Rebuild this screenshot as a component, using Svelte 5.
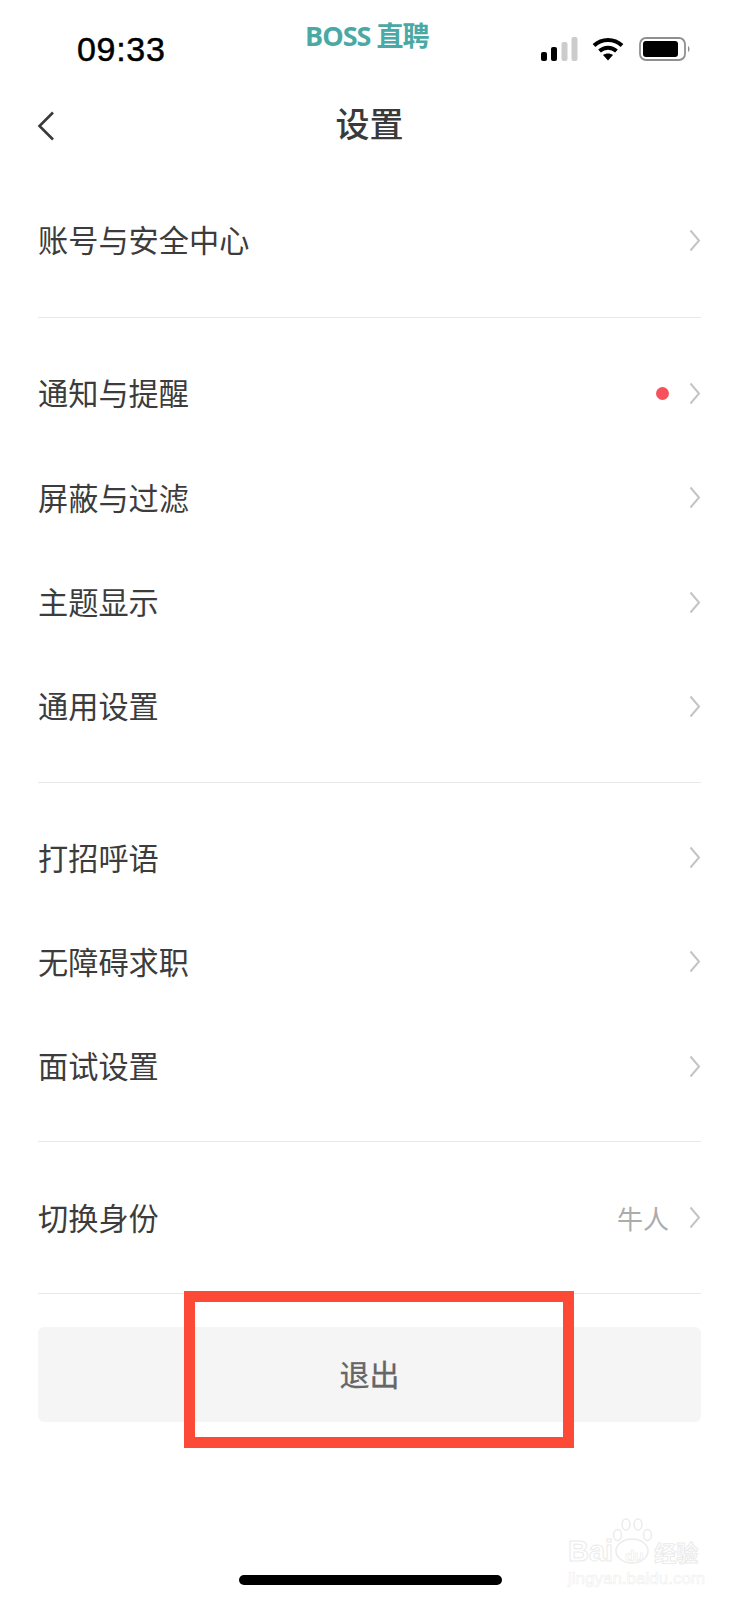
<script>
  const chevron = 'M1.5 1.5 L10 11.5 L1.5 21.5';
  const groups = [
    [{ label: '账号与安全中心' }],
    [{ label: '通知与提醒', dot: true }, { label: '屏蔽与过滤' }, { label: '主题显示' }, { label: '通用设置' }],
    [{ label: '打招呼语' }, { label: '无障碍求职' }, { label: '面试设置' }],
    [{ label: '切换身份', value: '牛人' }]
  ];
</script>

<div class="page">
  <header class="status">
    <span class="time">09:33</span>
    <span class="brand">BOSS 直聘</span>
    <div class="sys">
      <svg width="37" height="24" viewBox="0 0 37 24">
        <rect x="0" y="15" width="6" height="9" rx="2" fill="#000"/>
        <rect x="10" y="10" width="6" height="14" rx="2" fill="#000"/>
        <rect x="20.500" y="5" width="6" height="19" rx="2" fill="#ccc"/>
        <rect x="30.500" y="0" width="6" height="24" rx="2" fill="#ccc"/>
      </svg>
      <svg width="32" height="24" viewBox="0 0 32 24">
        <path d="M2 8.500 C10 1 22 1 30 8.500" fill="none" stroke="#000" stroke-width="4"/>
        <path d="M7.500 14 C12.500 9.500 19.500 9.500 24.500 14" fill="none" stroke="#000" stroke-width="4"/>
        <path d="M11 18 C14 16 18 16 21 18 L16 23.500 Z" fill="#000"/>
      </svg>
      <svg class="batt" width="52" height="24" viewBox="0 0 52 24">
        <rect x="1" y="1" width="45" height="22" rx="6" fill="#fff" stroke="#8f8f8f" stroke-width="1.800"/>
        <rect x="4" y="4" width="35" height="16" rx="3" fill="#000"/>
        <path d="M49 9 C51 10 51 14 49 15 Z" fill="#8f8f8f"/>
      </svg>
    </div>
  </header>

  <nav class="nav">
    <svg class="back" width="18" height="30" viewBox="0 0 18 30">
      <path d="M16 1.500 L2.500 15 L16 28.500" fill="none" stroke="#3a3a3a" stroke-width="2.600"/>
    </svg>
    <h1>设置</h1>
  </nav>

  <main class="list">
    {#each groups as group}
      <section class="group">
        {#each group as item}
          <div class="row">
            <span class="label">{item.label}</span>
            <span class="right">
              {#if item.dot}<i class="dot"></i>{/if}
              {#if item.value}<span class="value">{item.value}</span>{/if}
              <svg width="12" height="23" viewBox="0 0 12 23">
                <path d={chevron} fill="none" stroke="#c4c4c4" stroke-width="2"/>
              </svg>
            </span>
          </div>
        {/each}
      </section>
    {/each}
    <button class="logout">退出</button>
  </main>

  <div class="mark"></div>

  <div class="watermark">
    <svg class="paw" width="42" height="46" viewBox="0 0 42 46">
      <g fill="#fff" stroke="#ebebeb" stroke-width="1.500">
        <ellipse cx="5.500" cy="17" rx="4" ry="5.500"/>
        <ellipse cx="14" cy="6.500" rx="4" ry="5.500"/>
        <ellipse cx="26" cy="6.500" rx="4" ry="5.500"/>
        <ellipse cx="35.500" cy="17" rx="4" ry="5.500"/>
        <ellipse cx="20" cy="33" rx="16" ry="12"/>
      </g>
    </svg>
    <div class="wm-top"><span>Bai</span><span class="du">du</span><span class="jy">经验</span></div>
    <div class="wm-url">jingyan.baidu.com</div>
  </div>

  <div class="home"></div>
</div>

<style>
  :global(body) { margin: 0; background: #fff; }
  .page {
    position: relative;
    width: 739px;
    height: 1600px;
    overflow: hidden;
    background: #fff;
    font-family: "Noto Sans CJK SC", "Noto Sans", sans-serif;
    color: #3a3a3a;
  }
  .status {
    height: 86px;
    box-sizing: border-box;
    padding: 0 48px 0 77px;
    display: flex;
    align-items: center;
    justify-content: space-between;
    position: relative;
  }
  .time {
    font-family: "Liberation Sans", sans-serif;
    font-size: 34px;
    font-weight: 400;
    letter-spacing: 0.7px;
    color: #000;
    -webkit-text-stroke: 0.5px #000;
    padding-top: 12px;
  }
  .brand {
    position: absolute;
    left: 305px;
    top: 17px;
    font-family: "Open Sans", "Noto Sans CJK SC", sans-serif;
    font-size: 27px;
    font-weight: 700;
    line-height: 38px;
    letter-spacing: -1px;
    color: #4aa9a5;
  }
  .sys {
    display: flex;
    align-items: center;
    gap: 14px;
    padding-top: 12px;
  }
  .batt { margin-left: 1px; }
  .nav {
    height: 80px;
    position: relative;
    display: flex;
    align-items: center;
    justify-content: center;
  }
  .back { position: absolute; left: 37px; top: 25px; }
  h1 {
    margin: 0 0 6px;
    font-size: 34px;
    line-height: 40px;
    font-weight: 500;
    color: #3a3a3a;
  }
  .list { padding: 0 38px; }
  .group {
    border-bottom: 1px solid #e8e8e8;
    padding: 23px 0;
  }
  .group:nth-child(1) { padding: 22px 0 25px; }
  .group:nth-child(2) { padding-bottom: 24px; }
  .group:nth-child(3) { padding-top: 22px; }
  .row {
    height: 104.300px;
    display: flex;
    align-items: center;
    justify-content: space-between;
  }
  .label {
    font-size: 30.200px;
    font-weight: 400;
    line-height: 40px;
    margin-bottom: 2px;
    color: #3c3c3c;
  }
  .right {
    display: flex;
    align-items: center;
    margin-right: -1px;
  }
  .right svg { margin-right: 1px; }
  .dot {
    width: 13px;
    height: 13px;
    border-radius: 50%;
    background: #f9515c;
    margin-right: 20px;
  }
  .value {
    font-size: 26px;
    line-height: 36px;
    color: #acacac;
    margin-right: 20px;
  }
  .logout {
    display: block;
    width: 100%;
    height: 95px;
    margin-top: 33px;
    border: 0;
    padding: 0 0 3px;
    border-radius: 6px;
    background: #f5f5f5;
    font-family: inherit;
    font-size: 30px;
    font-weight: 400;
    -webkit-text-stroke: 0.3px #666;
    color: #666;
  }
  .mark {
    position: absolute;
    left: 184px;
    top: 1291px;
    width: 390px;
    height: 157px;
    box-sizing: border-box;
    border: 11px solid #fc4a36;
  }
  .watermark {
    position: absolute;
    left: 568px;
    top: 1518px;
    width: 136px;
    color: #fff;
    font-family: "Liberation Sans", sans-serif;
    -webkit-text-stroke: 1px #ebebeb;
  }
  .paw { position: absolute; left: 44px; top: 0; }
  .wm-top {
    position: relative;
    margin-top: 18px;
    display: flex;
    align-items: baseline;
    font-size: 29px;
    line-height: 30px;
    font-weight: 700;
  }
  .du {
    font-size: 15px;
    margin-left: 12px;
    width: 26px;
    -webkit-text-stroke: 0.5px #e8e8e8;
  }
  .jy {
    font-family: "Noto Sans CJK SC", sans-serif;
    font-size: 22px;
    margin-left: 3px;
    white-space: nowrap;
  }
  .wm-url {
    font-size: 17px;
    line-height: 20px;
    white-space: nowrap;
    margin-top: -2px;
    -webkit-text-stroke: 0.6px #f0f0f0;
  }
  .home {
    position: absolute;
    left: 239px;
    top: 1575px;
    width: 263px;
    height: 10px;
    border-radius: 5px;
    background: #000;
  }
</style>
